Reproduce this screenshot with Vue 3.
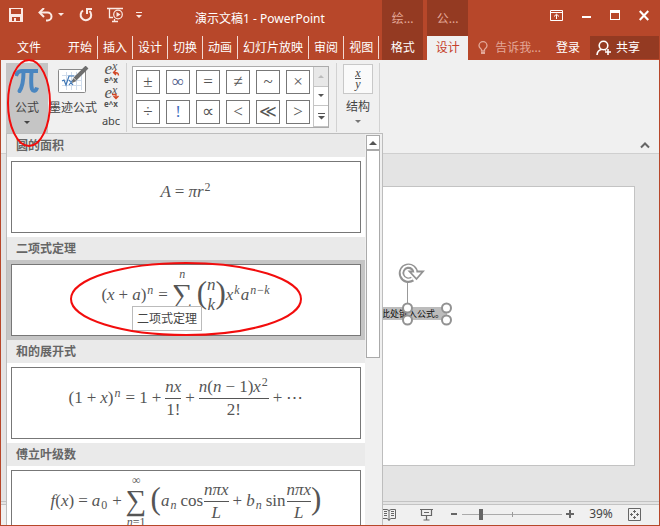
<script setup>
import { ref } from 'vue'

const tabs = ['开始', '插入', '设计', '切换', '动画', '幻灯片放映', '审阅', '视图']
const symbols = ['±', '∞', '=', '≠', '~', '×', '÷', '!', '∝', '<', '≪', '>']
const blueSymbols = ['∞', '!']
const zoom = ref(39)
</script>

<template>
  <div class="window">
    <header class="titlebar">
      <div class="main-head">
        <div class="quick">
          <button class="icon-btn" aria-label="保存">
            <svg width="14" height="14" viewBox="0 0 14 14"><path fill="#fbe9e4" fill-rule="evenodd" d="M0 0H14V14H0ZM2 1V6H12V1ZM3 9V13H5V10H7V13H11V9Z" /></svg>
          </button>
          <button class="icon-btn undo" aria-label="撤消">
            <svg width="26" height="14" viewBox="0 0 26 14"><path d="M2 4.500H9.500A4 4 0 0 1 9.500 12.500H8" fill="none" stroke="#fbe9e4" stroke-width="2" /><path d="M6 0L1.500 4.500L6 9" fill="none" stroke="#fbe9e4" stroke-width="2" /><path d="M20 5H26L23 8Z" fill="#fbe9e4" /></svg>
          </button>
          <button class="icon-btn redo" aria-label="恢复">
            <svg width="14" height="14" viewBox="0 0 14 14"><path d="M4 2.500A5.300 5.300 0 1 0 10.500 3" fill="none" stroke="#fbe9e4" stroke-width="2" /><path d="M8 6V1H13" fill="none" stroke="#fbe9e4" stroke-width="2" /></svg>
          </button>
          <button class="icon-btn show" aria-label="从头开始">
            <svg width="17" height="16" viewBox="0 0 17 16"><path d="M0 1.500H16M2.500 2V10.500H6M5 14.500H11M7.500 12V14" fill="none" stroke="#fbe9e4" stroke-width="1.300" /><circle cx="11" cy="7.500" r="4.300" fill="#b7472a" stroke="#fbe9e4" stroke-width="1.200" /><path d="M9.500 5L13.500 7.500L9.500 10Z" fill="#fbe9e4" /></svg>
          </button>
          <button class="icon-btn more" aria-label="自定义快速访问工具栏">
            <svg width="6" height="7" viewBox="0 0 6 7"><path d="M0 0H6V1H0ZM0 3H6L3 6Z" fill="#fbe9e4" /></svg>
          </button>
          <span class="doc-title">演示文稿1 - PowerPoint</span>
        </div>
        <nav class="tabs">
          <button class="tab file">文件</button>
          <button v-for="t in tabs" :key="t" class="tab lined">{{ t }}</button>
        </nav>
      </div>
      <div class="context">
        <span class="context-name">绘...</span>
        <button class="tab">格式</button>
      </div>
      <div class="context">
        <span class="context-name">公...</span>
        <button class="tab active">设计</button>
      </div>
      <div class="right-head">
        <div class="controls">
          <button class="icon-btn" aria-label="功能区显示选项">
            <svg width="13" height="11" viewBox="0 0 13 11"><path d="M.5 .5H12.500V10.500H.5ZM.5 2.500H12.500M6.500 9V4.500M4 6.500L6.500 4.200L9 6.500" fill="none" stroke="#fff" /></svg>
          </button>
          <button class="icon-btn" aria-label="最小化">
            <svg width="9" height="11" viewBox="0 0 9 11"><path d="M0 6H9V8H0Z" fill="#fff" /></svg>
          </button>
          <button class="icon-btn" aria-label="最大化">
            <svg width="10" height="11" viewBox="0 0 10 11"><path d="M0 0H10V10H0ZM1 3V9H9V3Z" fill="#fff" fill-rule="evenodd" /></svg>
          </button>
          <button class="icon-btn" aria-label="关闭">
            <svg width="10" height="11" viewBox="0 0 10 11"><path d="M.7 1L9.300 10M9.300 1L.7 10" stroke="#fff" stroke-width="2.200" /></svg>
          </button>
        </div>
        <div class="account">
          <button class="tell">
            <svg width="10" height="14" viewBox="0 0 10 14"><path d="M3.500 10V8.500C2 7 1 6.300 1 4.700A4 4 0 0 1 9 4.700C9 6.300 8 7 6.500 8.500V10Z" fill="none" stroke="#e3a898" stroke-width="1.300" /><path d="M3 11H7V13H3Z" fill="#e3a898" /></svg>
            告诉我...
          </button>
          <button class="sign">登录</button>
          <button class="share">
            <svg width="16" height="16" viewBox="0 0 16 16"><circle cx="7.500" cy="5.500" r="4.300" fill="none" stroke="#fff" stroke-width="1.600" /><path d="M1 15C1.300 11.500 3 10 5.500 9.500M9 9.500L10 10.500M12 9V15M9 12H15" fill="none" stroke="#fff" stroke-width="1.600" /></svg>
            共享
          </button>
        </div>
      </div>
    </header>

    <section class="ribbon">
      <button class="big pressed">
        <svg width="24" height="26" viewBox="0 0 24 26"><path d="M1 8C2 4 4 3 7 3H23" fill="none" stroke="#4a86c0" stroke-width="4" /><path d="M8.500 4C8.500 12 8 18 4.500 23" fill="none" stroke="#4a86c0" stroke-width="4" stroke-linecap="round" /><path d="M16.500 4C16 12 16 18 17 21C18 23.500 21 23.500 22 19.500" fill="none" stroke="#4a86c0" stroke-width="4" /></svg>
        <span>公式</span>
        <svg width="6" height="4" viewBox="0 0 6 4"><path d="M0 0H6L3 3Z" fill="#444" /></svg>
      </button>
      <button class="big ink">
        <svg width="32" height="28" viewBox="0 0 32 28"><rect x="1.500" y="3.500" width="27" height="23" rx="1" fill="#fff" stroke="#888" /><path d="M5 9.500H25M5 14.500H25M5 19.500H25M9.500 6V24M14.500 6V24M19.500 6V24M24.500 6V24" stroke="#cfdcec" /><path d="M5 15L7 14L9 19L12 10H17M12 14L16 19M16 14L12 19" fill="none" stroke="#3f77b5" stroke-width="1.200" /><path d="M30 1L18 13" stroke="#6d6d6d" stroke-width="4" /><path d="M15 17L16 12L19.500 15Z" fill="#6d6d6d" /></svg>
        <span>墨迹公式</span>
      </button>
      <div class="formats">
        <button class="convert" aria-label="专业型">
          <span class="power"><i>e</i><sup><i>x</i></sup></span>
          <span class="plain">e^x</span>
          <svg width="8" height="7" viewBox="0 0 8 7"><path d="M6.500 6.500C6.500 4 5.500 3.500 1.500 3.500M4 1L1.500 3.500L4 6" fill="none" stroke="#d24726" stroke-width="1.400" /></svg>
        </button>
        <button class="convert" aria-label="线性">
          <span class="power"><i>e</i><sup><i>x</i></sup></span>
          <span class="plain">e^x</span>
          <svg width="8" height="7" viewBox="0 0 8 7"><path d="M0 1.500H4V5.500M1.500 3L4 5.500L6.500 3" fill="none" stroke="#d24726" stroke-width="1.400" /></svg>
        </button>
        <button class="abc">abc</button>
      </div>
      <div class="rule"></div>
      <div class="gallery">
        <div class="cells">
          <button v-for="s in symbols" :key="s" :class="{ blue: blueSymbols.includes(s), bang: s === '!' }">{{ s }}</button>
        </div>
        <div class="steps">
          <button disabled aria-label="上一行"><svg width="6" height="4" viewBox="0 0 6 4"><path d="M0 3H6L3 0Z" fill="#bbb" /></svg></button>
          <button aria-label="下一行"><svg width="6" height="4" viewBox="0 0 6 4"><path d="M0 0H6L3 3Z" fill="#555" /></svg></button>
          <button aria-label="其他"><svg width="7" height="7" viewBox="0 0 7 7"><path d="M0 0H7V1H0ZM0 3H7L3.500 6.500Z" fill="#555" /></svg></button>
        </div>
      </div>
      <div class="rule"></div>
      <button class="structure">
        <span class="xy"><i>x</i><i>y</i></span>
        <span>结构</span>
        <svg width="6" height="4" viewBox="0 0 6 4"><path d="M0 0H6L3 3Z" fill="#777" /></svg>
      </button>
      <div class="rule"></div>
      <button class="collapse" aria-label="折叠功能区">
        <svg width="10" height="7" viewBox="0 0 10 7"><path d="M1 5.500L5 1.500L9 5.500" fill="none" stroke="#666" stroke-width="2" /></svg>
      </button>
    </section>

    <main class="canvas">
      <div class="slide">
        <div class="placeholder">
          在此处键入公式。
          <svg class="handles" width="62" height="66" viewBox="-10 0 62 66"><path d="M7.500 21V48" stroke="#999" /><path d="M12.500 17A7 7 0 1 1 15.500 11" fill="none" stroke="#929292" stroke-width="5.500" /><path d="M9.500 9.500H23L16.500 17Z" fill="#fff" stroke="#929292" stroke-width="1.800" /><path d="M12.500 16.500A7 7 0 1 1 15.500 11" fill="none" stroke="#fff" stroke-width="2" /><g fill="#fff" stroke="#929292" stroke-width="2"><circle cx="7.500" cy="46" r="4.500" /><circle cx="46.500" cy="46" r="4.500" /><circle cx="7.500" cy="58" r="4.500" /><circle cx="46.500" cy="58" r="4.500" /></g></svg>
        </div>
      </div>
    </main>

    <footer class="status">
      <button class="icon-btn" aria-label="阅读视图">
        <svg width="14" height="13" viewBox="0 0 14 13"><path d="M.5 1.500H5L7 2.500L9 1.500H13.500V10.500H9L7 12L5 10.500H.5ZM7 2V13M2 3.500H5M2 5.500H5M2 7.500H5M9 3.500H12M9 5.500H12M9 7.500H12" fill="none" stroke="#666" /></svg>
      </button>
      <button class="icon-btn present" aria-label="幻灯片放映">
        <svg width="13" height="13" viewBox="0 0 13 13"><path d="M0 1.500H13M1.500 2V7.500H11.500V2M4 4.500H9M6.500 8V12M3.500 12H9.500" fill="none" stroke="#666" stroke-width="1.200" /></svg>
      </button>
      <button class="icon-btn" aria-label="缩小"><svg width="8" height="8" viewBox="0 0 8 8"><path d="M1 3H7V5H1Z" fill="#666" /></svg></button>
      <input v-model="zoom" type="range" min="10" max="170" aria-label="缩放" class="slider" />
      <button class="icon-btn" aria-label="放大"><svg width="8" height="8" viewBox="0 0 8 8"><path d="M0 3H8V5H0ZM3 0H5V8H3Z" fill="#666" /></svg></button>
      <button class="percent">{{ zoom }}%</button>
      <button class="icon-btn" aria-label="使幻灯片适应当前窗口">
        <svg width="13" height="13" viewBox="0 0 13 13"><path d="M.5 .5H12.500V12.500H.5ZM6.500 2V5M5 3.500H8M6.500 8V11M5 9.500H8M2 6.500H5M3.500 5V8M8 6.500H11M9.500 5V8" fill="none" stroke="#666" /></svg>
      </button>
    </footer>

    <div class="menu">
      <div class="list">
        <h3>圆的面积</h3>
        <button class="entry">
          <span class="math"><i>A</i><b>=</b><i>πr</i><sup>2</sup></span>
        </button>
        <h3>二项式定理</h3>
        <button class="entry hover">
          <span class="math">(<i>x</i><b>+</b><i>a</i>)<sup><i>n</i></sup><b>=</b><span class="sum"><i>n</i><em>∑</em><span>k=0</span></span><span class="tall">(</span><span class="binom"><i>n</i><i>k</i></span><span class="tall">)</span><i>x</i><sup><i>k</i></sup><i>a</i><sup><i>n−k</i></sup></span>
        </button>
        <h3>和的展开式</h3>
        <button class="entry">
          <span class="math">(1<b>+</b><i>x</i>)<sup><i>n</i></sup><b>=</b>1<b>+</b><span class="frac"><i>nx</i><span>1!</span></span><b>+</b><span class="frac"><span class="line"><i>n</i>(<i>n</i><b>−</b>1)<i>x</i><sup>2</sup></span><span>2!</span></span><b>+</b>⋯</span>
        </button>
        <h3>傅立叶级数</h3>
        <button class="entry">
          <span class="math"><i>f</i>(<i>x</i>)<b>=</b><i>a</i><sub>0</sub><b>+</b><span class="sum"><span>∞</span><em>∑</em><span><i>n</i>=1</span></span><span class="tall">(</span><i>a</i><sub><i>n</i></sub><span class="fn">cos</span><span class="frac"><i>nπx</i><i>L</i></span><b>+</b><i>b</i><sub><i>n</i></sub><span class="fn">sin</span><span class="frac"><i>nπx</i><i>L</i></span><span class="tall">)</span></span>
        </button>
      </div>
      <div class="scrollbar">
        <button aria-label="向上滚动"><svg width="8" height="4" viewBox="0 0 8 4"><path d="M0 4H8L4 0Z" fill="#555" /></svg></button>
        <div class="thumb"></div>
      </div>
      <div class="tooltip" role="tooltip">二项式定理</div>
    </div>

    <svg class="marks" width="320" height="350" viewBox="0 0 320 350"><g fill="none" stroke="#f20d0d" stroke-width="2"><ellipse cx="29" cy="103" rx="21" ry="43" /><ellipse cx="186" cy="299" rx="115" ry="36" /></g></svg>
  </div>
</template>

<style>
body {
  margin: 0;
}
</style>

<style scoped>
* {
  box-sizing: border-box;
}
.window {
  position: relative;
  display: flex;
  flex-direction: column;
  min-height: 100vh;
  overflow: hidden;
  border: 1px solid #b7472a;
  border-top: 0;
  background: #e4e4e4;
  color: #444;
  font: 12px/16px "Noto Sans", "Noto Sans CJK SC", sans-serif;
}
button {
  margin: 0;
  padding: 0;
  border: 0;
  background: none;
  color: inherit;
  font: inherit;
}
svg {
  display: block;
  flex: none;
}
.titlebar {
  display: flex;
  height: 60px;
  background: #b7472a;
  color: #fff;
}
.main-head {
  display: flex;
  flex-direction: column;
  padding-right: 3px;
}
.quick {
  display: flex;
  align-items: center;
  height: 36px;
  padding: 0 0 6px 8px;
}
.undo {
  margin-left: 15px;
}
.redo {
  margin-left: 15px;
}
.show {
  margin-left: 14px;
}
.more {
  margin-left: 12px;
}
.doc-title {
  padding-top: 8px;
  margin-left: 53px;
}
.tabs {
  display: flex;
  height: 23px;
}
.tab {
  height: 24px;
  padding: 0 5px;
  line-height: 22px;
}
.tabs .tab {
  height: 23px;
}
.file {
  padding: 0 16px;
  margin-right: 6px;
}
.lined {
  border-right: 1px solid #f3d9d2;
}
.context {
  display: flex;
  flex-direction: column;
  width: 41px;
  margin-right: 4px;
  background: #943a22;
  text-align: center;
}
.context-name {
  height: 36px;
  padding-top: 11px;
  color: #e3a898;
}
.active {
  background: #f0f0f0;
  color: #c5412a;
}
.right-head {
  flex: 1;
}
.controls {
  display: flex;
  justify-content: flex-end;
  gap: 19px;
  height: 36px;
  padding: 10px 10px 0 0;
  align-items: flex-start;
}
.account {
  display: flex;
  justify-content: flex-end;
  height: 23px;
}
.tell {
  display: flex;
  align-items: center;
  gap: 7px;
  color: #e3a898;
}
.sign {
  margin: 0 10px 0 15px;
}
.share {
  display: flex;
  align-items: center;
  gap: 4px;
  width: 69px;
  padding-left: 6px;
  background: #943a22;
}
.ribbon {
  display: flex;
  align-items: flex-start;
  height: 94px;
  padding: 3px 0 0 5px;
  border-bottom: 1px solid #cfcfcf;
  background: #f0f0f0;
}
.big {
  display: flex;
  flex-direction: column;
  align-items: center;
  width: 42px;
  height: 70px;
  padding-top: 5px;
}
.pressed {
  background: #c5c5c5;
}
.big span {
  margin: 6px 0 5px;
  white-space: nowrap;
}
.ink {
  width: 50px;
  padding-top: 3px;
}
.formats {
  display: flex;
  flex-direction: column;
  align-items: center;
  width: 22px;
  gap: 3px;
  margin: 0 4px 0 2px;
}
.abc {
  margin-top: 2px;
  font-size: 11px;
}
.convert {
  position: relative;
  display: flex;
  flex-direction: column;
  align-items: center;
  height: 21px;
  color: #555;
}
.convert svg {
  position: absolute;
  right: -2px;
  top: 6px;
}
.power {
  display: flex;
  height: 12px;
  font: 17px/12px "Liberation Serif", serif;
}
.power sup {
  padding: 0;
  font-size: 12px;
  line-height: 6px;
}
.plain {
  font-size: 8px;
  font-weight: bold;
  line-height: 9px;
}
.rule {
  width: 1px;
  height: 69px;
  background: #d2d2d2;
}
.gallery {
  display: flex;
  height: 62px;
  margin: 3px 7px 0 5px;
  border: 1px solid #ababab;
  background: #fff;
}
.cells {
  display: grid;
  grid-template-columns: repeat(6, 24px);
  gap: 6px;
  padding: 3px;
}
.cells button {
  height: 24px;
  border: 1px solid #777;
  color: #555;
  font: 17px/20px "Liberation Serif", serif;
}
.cells .blue {
  color: #51608a;
}
.cells .bang {
  color: #3f6fc0;
}
.steps {
  display: grid;
  grid-template-rows: 20px 19px 21px;
  width: 15px;
  border-left: 1px solid #c5c5c5;
}
.steps button {
  display: grid;
  place-items: center;
  border-bottom: 1px solid #c5c5c5;
}
.steps button:disabled {
  background: #e8e8e8;
}
.structure {
  display: flex;
  flex-direction: column;
  align-items: center;
  gap: 5px;
  margin: 1px 6px 0;
}
.xy {
  display: flex;
  flex-direction: column;
  align-items: center;
  width: 30px;
  height: 30px;
  padding-top: 3px;
  border: 1px solid #c8c8c8;
  background: #fafafa;
  font: 12px/10px "Liberation Serif", serif;
}
.xy i:first-child {
  border-bottom: 1px solid #555;
}
.collapse {
  align-self: flex-end;
  margin: 0 9px 4px auto;
}
.canvas {
  display: flex;
  flex: 1;
  padding: 32px 24px 35px 32px;
}
.slide {
  position: relative;
  flex: 1;
  border: 1px solid #c3c3c3;
  background: #fff;
}
.placeholder {
  position: absolute;
  left: 338px;
  top: 120px;
  width: 75px;
  height: 13px;
  background: #bcbcbc;
  color: #111;
  font-size: 9px;
  line-height: 13px;
  white-space: nowrap;
}
.handles {
  position: absolute;
  right: -5px;
  top: -45px;
}
.status {
  display: flex;
  align-items: center;
  justify-content: flex-end;
  height: 25px;
  padding: 1px 18px 0 0;
  border-top: 1px solid #c3c3c3;
  border-bottom: 1px solid #b7472a;
  background: linear-gradient(#e4e4e4 2px, #c3c3c3 2px 3px, #f0f0f0 3px);
  margin-bottom: -1px;
}
.present {
  margin: 0 17px 0 24px;
}
.slider {
  appearance: none;
  width: 100px;
  height: 12px;
  margin: 0 4px;
  background: linear-gradient(#999, #999) 50% 50% / 1px 5px no-repeat, linear-gradient(#aaa, #aaa) 0 50% / 100% 1px no-repeat;
}
.slider::-webkit-slider-thumb {
  appearance: none;
  width: 4px;
  height: 11px;
  background: #666;
}
.percent {
  width: 54px;
}
.menu {
  position: absolute;
  left: 5px;
  top: 133px;
  bottom: -1px;
  display: flex;
  width: 377px;
  overflow: hidden;
  border: 1px solid #bdbdbd;
  border-bottom: 0;
  background: #fff;
}
.list {
  flex: 1;
}
h3 {
  height: 24px;
  margin: 0 0 -1px;
  padding-left: 9px;
  background: #eaeaea;
  color: #666;
  font-size: 12px;
  line-height: 23px;
}
.entry {
  display: flex;
  justify-content: center;
  align-items: flex-start;
  position: relative;
  width: 100%;
  height: 80px;
  border: 4px solid #fff;
  background: #fff;
  outline: 1px solid #777;
  outline-offset: -5px;
}
.hover {
  border-color: #c5c5c5;
}
.math {
  display: flex;
  align-items: center;
  height: 62px;
  color: #555;
  font: 17px/18px "Liberation Serif", serif;
}
.math b {
  margin: 0 4px;
  font-weight: normal;
}
sup,
sub {
  font-size: 12px;
  line-height: 12px;
  vertical-align: baseline;
}
sup {
  padding: 0 1px 10px;
}
sub {
  padding: 8px 1px 0;
}
.sum {
  display: flex;
  flex-direction: column;
  align-items: center;
  margin-right: 4px;
  font-size: 12px;
  line-height: 10px;
}
.sum em {
  height: 32px;
  font: 29px/31px "Liberation Serif", serif;
}
.tall {
  height: 36px;
  font-size: 31px;
  line-height: 32px;
}
.binom,
.frac {
  display: flex;
  flex-direction: column;
  align-items: center;
}
.binom {
  gap: 2px;
}
.frac > :first-child {
  padding-bottom: 2px;
  border-bottom: 1px solid #555;
}
.frac > :last-child {
  padding-top: 2px;
}
.line {
  display: flex;
  align-items: center;
}
.line sup {
  line-height: 8px;
}
.fn {
  margin: 0 1px 0 3px;
}
.scrollbar {
  display: flex;
  flex-direction: column;
  width: 17px;
  padding: 1px 2px 0 1px;
  background: #f0f0f0;
}
.scrollbar button {
  display: grid;
  place-items: center;
  height: 15px;
  border: 1px solid #aaa;
  background: #fff;
}
.thumb {
  height: 208px;
  border: 1px solid #aaa;
  background: #fff;
}
.tooltip {
  position: absolute;
  left: 125px;
  top: 172px;
  padding: 3px 4px;
  border: 1px solid #bbb;
  background: #fff;
  line-height: 17px;
}
.marks {
  position: absolute;
  left: -1px;
  top: 0;
  pointer-events: none;
}
</style>
